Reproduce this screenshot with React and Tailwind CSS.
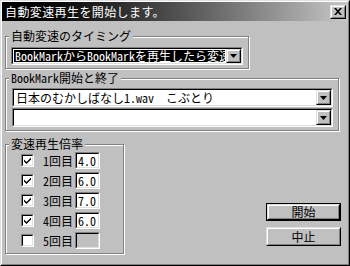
const font = "font-['Noto_Sans_CJK_JP',sans-serif] [font-feature-settings:'hwid']";

function Raised({ className = '', children, def = false }) {
  const box = (
    <div className="h-full border border-t-[#dfdfdf] border-l-[#dfdfdf] border-b-black border-r-black">
      <div className="flex h-full items-center justify-center border border-t-white border-l-white border-b-[#808080] border-r-[#808080] bg-[#c0c0c0]">
        {children}
      </div>
    </div>
  );
  if (def) return <div className={`border border-black ${className}`}>{box}</div>;
  return <div className={className}>{box}</div>;
}

function Sunken({ className = '', inner = '', children }) {
  return (
    <div className={`border border-t-[#808080] border-l-[#808080] border-b-white border-r-white ${className}`}>
      <div className={`flex h-full border border-t-black border-l-black border-b-[#dfdfdf] border-r-[#dfdfdf] ${inner}`}>
        {children}
      </div>
    </div>
  );
}

function DropBtn() {
  return (
    <Raised className="h-full w-[15px] shrink-0">
      <svg width="7" height="4" viewBox="0 0 7 4">
        <path d="M0 0h7L3.5 4z" fill="black" />
      </svg>
    </Raised>
  );
}

function Combo({ className, text, selected }) {
  return (
    <Sunken className={className} inner="bg-white">
      <div className="flex min-w-0 flex-1 items-center overflow-hidden p-[1px]">
        <div
          className={`flex h-full flex-1 items-center overflow-hidden whitespace-pre pl-[1px] leading-[14px] text-[12px] ${
            selected ? 'bg-black text-white' : 'text-black'
          }`}
        >
          {text}
        </div>
      </div>
      <DropBtn />
    </Sunken>
  );
}

function Group({ label, className, children }) {
  return (
    <div className={`relative border border-[#808080] shadow-[1px_1px_0_white,inset_1px_1px_0_white] ${className}`}>
      <span className="absolute left-[3px] top-[-7px] bg-[#c0c0c0] px-[2px] leading-[12px] text-[12px] text-black">
        {label}
      </span>
      {children}
    </div>
  );
}

const rates = [
  { n: '1', v: '4.0', on: true },
  { n: '2', v: '6.0', on: true },
  { n: '3', v: '7.0', on: true },
  { n: '4', v: '6.0', on: true },
  { n: '5', v: '', on: false },
];

export default function App() {
  return (
    <div className={`h-[266px] w-[350px] border border-t-[#dfdfdf] border-l-[#dfdfdf] border-b-black border-r-black ${font}`}>
      <div className="flex h-full flex-col border border-t-white border-l-white border-b-[#808080] border-r-[#808080] bg-[#c0c0c0]">
        {/* タイトルバー */}
        <div className="flex h-[19px] shrink-0 items-center bg-linear-to-r from-black via-[#505050] to-[#c8c8c8] pl-[3px] pr-[2px]">
          <span className="flex-1 leading-[13px] text-[12px] tracking-[0.4px] text-white">自動変速再生を開始します。</span>
          <Raised className="h-[14px] w-[16px]">
            <svg width="8" height="7" viewBox="0 0 8 7">
              <path d="M0 0h2l2 2.3L6 0h2L5 3.5 8 7H6L4 4.7 2 7H0l3-3.5z" fill="black" />
            </svg>
          </Raised>
        </div>

        <Group label="自動変速のタイミング" className="ml-[3px] mt-[15px] h-[33px] w-[244px] shrink-0">
          <Combo
            className="ml-[5px] mt-[10px] h-[18px] w-[232px]"
            selected
            text="BookMarkからBookMarkを再生したら変速する"
          />
        </Group>

        <Group label="BookMark開始と終了" className="ml-[3px] mt-[9px] h-[53px] w-[334px] shrink-0">
          <Combo className="ml-[6px] mt-[9px] h-[19px] w-[321px]" text="日本のむかしばなし1.wav  こぶとり" />
          <Combo className="ml-[6px] mt-[1px] h-[19px] w-[321px]" text="" />
        </Group>

        <div className="flex items-start">
          <Group label="変速再生倍率" className="ml-[3px] mt-[13px] h-[110px] w-[119px] shrink-0">
            <div className="mt-[7px] flex flex-col gap-[3px]">
              {rates.map((r) => (
                <div key={r.n} className="flex h-[17px] items-center">
                  <Sunken className="ml-[15px] h-[13px] w-[13px]" inner="items-center justify-center bg-white">
                    {r.on && (
                      <svg width="7" height="7" viewBox="0 0 7 7">
                        <path d="M0 2.5l2.5 2.5L7 0.5v2L2.5 7 0 4.5z" fill="black" />
                      </svg>
                    )}
                  </Sunken>
                  <span className="ml-[9px] w-[32px] leading-[12px] text-[12px] text-black">{r.n}回目</span>
                  <Sunken
                    className="h-[17px] w-[25px]"
                    inner={`items-center pl-[1px] leading-[12px] text-[12px] text-black ${r.on ? 'bg-white' : 'bg-[#c0c0c0]'}`}
                  >
                    {r.v}
                  </Sunken>
                </div>
              ))}
            </div>
          </Group>

          <div className="ml-[142px] mt-[72px] flex flex-col">
            <Raised def className="h-[18px] w-[75px]">
              <span className="leading-[12px] text-[12px] text-black">開始</span>
            </Raised>
            <Raised className="mt-[6px] h-[19px] w-[75px]">
              <span className="leading-[12px] text-[12px] text-black">中止</span>
            </Raised>
          </div>
        </div>
      </div>
    </div>
  );
}
